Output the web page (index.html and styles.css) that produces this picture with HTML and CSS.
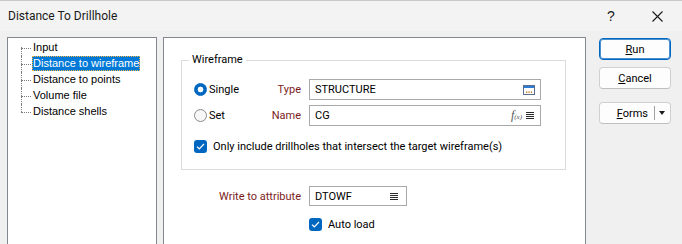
FILE: index.html
```html
<!DOCTYPE html>
<html>
<head>
<meta charset="utf-8">
<link rel="stylesheet" href="styles.css">
</head>
<body>
<div class="window">
  <div class="titlebar">
    <span class="title">Distance To Drillhole</span>
    <span class="help">?</span>
    <span class="close"><svg width="11" height="11" viewBox="0 0 11 11"><path d="M0.5 0.5L10.5 10.5M10.5 0.5L0.5 10.5" stroke="#1a1a1a" stroke-width="1.1" fill="none"/></svg></span>
  </div>
  <div class="content">
    <div class="tree">
      <ul class="tree-list">
        <li class="first"><span class="node">Input</span></li>
        <li><span class="node selected">Distance to wireframe</span></li>
        <li><span class="node">Distance to points</span></li>
        <li><span class="node">Volume file</span></li>
        <li class="last"><span class="node">Distance shells</span></li>
      </ul>
    </div>
    <div class="panel">
      <div class="group">
        <div class="legend">Wireframe</div>
        <div class="wf-grid">
          <label class="radio"><span class="radio-dot on"></span>Single</label>
          <span class="flabel">Type</span>
          <div class="field">
            <span class="val">STRUCTURE</span>
            <svg class="browse" width="12" height="10" viewBox="0 0 12 10"><rect x="0.5" y="0.5" width="11" height="9" fill="#fff" stroke="#5a6f8f"/><rect x="1" y="1" width="10" height="2" fill="#2e7bd4"/><rect x="3" y="6.5" width="1.3" height="1.3" fill="#b56a12"/><rect x="5.4" y="6.5" width="1.3" height="1.3" fill="#b56a12"/><rect x="7.8" y="6.5" width="1.3" height="1.3" fill="#b56a12"/></svg>
          </div>
          <label class="radio"><span class="radio-dot"></span>Set</label>
          <span class="flabel">Name</span>
          <div class="field">
            <span class="val">CG</span>
            <span class="fx"><i>f</i><span class="fxs">(x)</span></span>
            <svg class="menu" width="8" height="7" viewBox="0 0 8 7"><path d="M0 0.5H8M0 2.5H8M0 4.5H8M0 6.5H8" stroke="#2a2a2a" stroke-width="1"/></svg>
          </div>
        </div>
        <label class="check wf-check"><span class="box"><svg width="9" height="7" viewBox="0 0 9 7"><path d="M1 3.6L3.3 5.8L8 1" stroke="#fff" stroke-width="1.2" fill="none"/></svg></span>Only include drillholes that intersect the target wireframe(s)</label>
      </div>
      <div class="attr-grid">
        <span class="flabel">Write to attribute</span>
        <div class="field attr-field">
          <span class="val">DTOWF</span>
          <svg class="menu" width="8" height="7" viewBox="0 0 8 7"><path d="M0 0.5H8M0 2.5H8M0 4.5H8M0 6.5H8" stroke="#2a2a2a" stroke-width="1"/></svg>
        </div>
        <label class="check autoload"><span class="box"><svg width="9" height="7" viewBox="0 0 9 7"><path d="M1 3.6L3.3 5.8L8 1" stroke="#fff" stroke-width="1.2" fill="none"/></svg></span>Auto load</label>
      </div>
    </div>
    <div class="buttons">
      <button class="btn primary"><u>R</u>un</button>
      <button class="btn"><u>C</u>ancel</button>
      <button class="btn forms"><span class="forms-label"><u>F</u>orms</span><span class="sep"></span><span class="arrow"></span></button>
    </div>
  </div>
</div>
</body>
</html>
```

FILE: styles.css
```css
html, body {
  margin: 0;
  padding: 0;
  height: 100%;
  overflow: hidden;
}
body {
  background: #f0f0f0;
  font-family: Roboto, "Liberation Sans", Arial, sans-serif;
  font-size: 11px;
  color: #000;
}
.window {
  height: 100%;
  border-top: 1px solid #c9c9c9;
  box-sizing: border-box;
  overflow: hidden;
}
.titlebar {
  height: 30px;
  display: flex;
  align-items: center;
  padding-left: 8px;
  background: #f3f3f3;
}
.title {
  flex: 1;
  font-size: 12px;
  color: #1a1a1a;
}
.help {
  font-size: 14px;
  width: 14px;
  margin-right: 31px;
  color: #1a1a1a;
  font-family: "Liberation Sans", Arial, sans-serif;
}
.close {
  width: 11px;
  height: 11px;
  margin-right: 19px;
  display: flex;
}
.content {
  display: flex;
  align-items: flex-start;
  padding: 6px 0 0 7px;
}
.tree {
  width: 148px;
  height: 206px;
  background: #fff;
  border: 1px solid #828790;
  border-bottom-color: transparent;
  flex: none;
}
.tree-list {
  list-style: none;
  margin: 0;
  padding: 2px 0 0 0;
  font-family: "Liberation Sans", Arial, sans-serif;
  font-size: 11px;
}
.tree-list li {
  position: relative;
  height: 16px;
  line-height: 15px;
  padding-left: 24px;
}
.tree-list li::before {
  content: "";
  position: absolute;
  left: 13px;
  top: 8px;
  width: 10px;
  border-top: 1px dotted #7a7a7a;
}
.tree-list li::after {
  content: "";
  position: absolute;
  left: 13px;
  top: 0;
  height: 16px;
  border-left: 1px dotted #7a7a7a;
}
.tree-list li.first::after {
  top: 7px;
  height: 9px;
}
.tree-list li.last::after {
  height: 8px;
}
.node {
  display: inline-block;
  padding: 0 1px;
  height: 15px;
  color: #000;
}
.node.selected {
  background: #0078d7;
  color: #fff;
  outline: 1px dotted #f6b73c;
  outline-offset: -1px;
}
.panel {
  width: 421px;
  height: 184px;
  margin-left: 6px;
  background: #fff;
  border: 1px solid #828790;
  border-bottom-color: transparent;
  flex: none;
  padding-top: 22px;
  box-sizing: content-box;
}
.group {
  margin: 0 19px 0 17px;
  border: 1px solid #dcdcdc;
  padding: 0 0 16px 12px;
}
.legend {
  width: fit-content;
  margin: -8px 0 0 -5px;
  padding: 0 3px;
  background: #fff;
  line-height: 14px;
  font-size: 11px;
}
.wf-grid {
  display: grid;
  grid-template-columns: 70px 45px 232px;
  grid-template-rows: 21px 21px;
  row-gap: 5px;
  margin-top: 12px;
  align-items: center;
}
.radio {
  display: flex;
  align-items: center;
  gap: 2px;
}
.radio-dot {
  width: 11px;
  height: 11px;
  border-radius: 50%;
  border: 1px solid #8a8a8a;
  background: #f7f7f7;
  box-sizing: content-box;
}
.radio-dot.on {
  border-color: #0067c0;
  background: radial-gradient(circle, #fff 0 2.6px, #0067c0 3.2px);
}
.flabel {
  color: #7b1c1c;
  text-align: right;
  padding-right: 8px;
}
.field {
  height: 21px;
  box-sizing: border-box;
  border: 1px solid #a9a9a9;
  background: #fff;
  display: flex;
  align-items: center;
  padding: 0 5px 0 5px;
}
.val {
  flex: 1;
}
.fx {
  font-family: "Liberation Serif", serif;
  color: #555;
  font-size: 11px;
  margin-right: 4px;
}
.fx i {
  font-size: 12px;
}
.fxs {
  font-size: 7px;
  font-style: italic;
}
.menu {
  margin-right: 1px;
}
.check {
  display: flex;
  align-items: center;
  gap: 6px;
  height: 13px;
}
.box {
  width: 13px;
  height: 13px;
  border-radius: 3px;
  background: #0067c0;
  display: flex;
  align-items: center;
  justify-content: center;
  flex: none;
}
.wf-check {
  margin-top: 14px;
}
.attr-grid {
  display: grid;
  grid-template-columns: 145px 98px;
  grid-template-rows: 20px 13px;
  row-gap: 12px;
  margin-top: 16px;
  align-items: center;
}
.attr-field {
  height: 20px;
  padding-right: 7px;
}
.autoload {
  grid-column: 2;
}
.buttons {
  display: flex;
  flex-direction: column;
  margin-left: 13px;
  padding-top: 1px;
  width: 72px;
}
.btn {
  height: 22px;
  width: 72px;
  box-sizing: border-box;
  border: 1px solid #d0d0d0;
  border-bottom-color: #bfbfbf;
  border-radius: 4px;
  background: #fdfdfd;
  font-family: Roboto, "Liberation Sans", Arial, sans-serif;
  font-size: 11px;
  color: #000;
  padding: 0;
  margin: 0 0 7px 0;
}
.btn.primary {
  border-color: #0067c0;
  box-shadow: inset 0 0 0 1px #4a90d0;
}
.btn.forms {
  margin-top: 6px;
  display: flex;
  align-items: center;
}
.forms-label {
  flex: 1;
  text-align: right;
  padding-right: 6px;
}
.sep {
  width: 1px;
  height: 14px;
  background: #a0a0a0;
}
.arrow {
  width: 0;
  height: 0;
  border-left: 3.5px solid transparent;
  border-right: 3.5px solid transparent;
  border-top: 4px solid #1a1a1a;
  margin: 0 5px 0 4px;
}
```
